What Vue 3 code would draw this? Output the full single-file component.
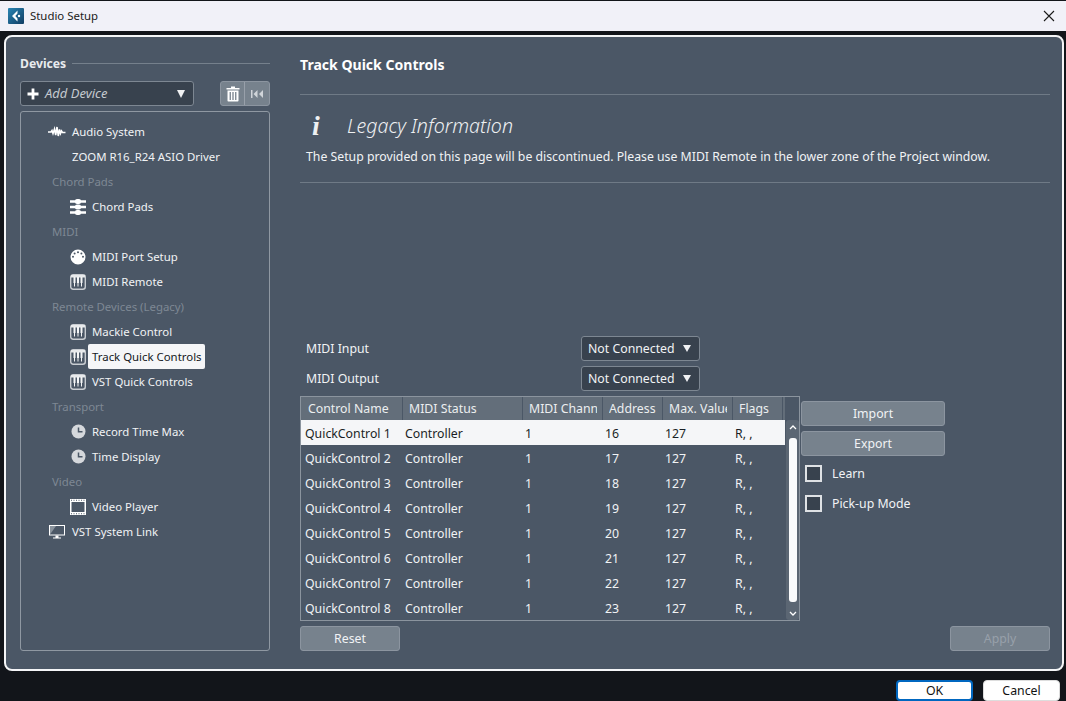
<script setup>
const tree = [
  { type: 'top', icon: 'wave', text: 'Audio System' },
  { type: 'top', icon: '', text: 'ZOOM R16_R24 ASIO Driver' },
  { type: 'group', text: 'Chord Pads' },
  { type: 'item', icon: 'pads', text: 'Chord Pads' },
  { type: 'group', text: 'MIDI' },
  { type: 'item', icon: 'din', text: 'MIDI Port Setup' },
  { type: 'item', icon: 'keys', text: 'MIDI Remote' },
  { type: 'group', text: 'Remote Devices (Legacy)' },
  { type: 'item', icon: 'keys', text: 'Mackie Control' },
  { type: 'item', icon: 'keys', text: 'Track Quick Controls', selected: true },
  { type: 'item', icon: 'keys', text: 'VST Quick Controls' },
  { type: 'group', text: 'Transport' },
  { type: 'item', icon: 'clock', text: 'Record Time Max' },
  { type: 'item', icon: 'clock', text: 'Time Display' },
  { type: 'group', text: 'Video' },
  { type: 'item', icon: 'film', text: 'Video Player' },
  { type: 'top', icon: 'monitor', text: 'VST System Link' },
]
const headers = ['Control Name', 'MIDI Status', 'MIDI Channel', 'Address', 'Max. Value', 'Flags']
const rows = Array.from({ length: 8 }, (_, i) => ({
  name: `QuickControl ${i + 1}`,
  status: 'Controller',
  channel: '1',
  address: String(16 + i),
  max: '127',
  flags: 'R, ,',
}))
</script>

<template>
  <div class="window">
    <header class="titlebar">
      <svg class="logo" viewBox="0 0 16 16" width="16" height="16">
        <defs>
          <linearGradient id="lg" x1="0" y1="0" x2="1" y2="1">
            <stop offset="0" stop-color="#2a86b4" />
            <stop offset="1" stop-color="#103c62" />
          </linearGradient>
        </defs>
        <rect width="16" height="16" rx="1" fill="url(#lg)" />
        <path d="M9.5 2.5 L4 8 L9.5 13.5 L9.5 10.5 L7.3 8 L9.5 5.5 Z" fill="#fff" />
        <circle cx="11" cy="8" r="1.2" fill="#fff" />
      </svg>
      <span class="title">Studio Setup</span>
      <svg class="close" viewBox="0 0 12 12" width="12" height="12">
        <path d="M1 1 L11 11 M11 1 L1 11" stroke="#1a1a1a" stroke-width="1.1" fill="none" />
      </svg>
    </header>

    <main class="panel">
      <aside class="devices">
        <div class="devices-head">
          <span class="devices-title">Devices</span>
          <span class="devices-line"></span>
        </div>
        <div class="toolbar">
          <div class="add-device">
            <svg viewBox="0 0 12 12" width="12" height="12"><path d="M4.6 0.5h2.8v4.1h4.1v2.8H7.4v4.1H4.6V7.4H0.5V4.6h4.1z" fill="#fff" /></svg>
            <span class="add-text">Add Device</span>
            <span class="tri big"></span>
          </div>
          <div class="tool-group">
            <button class="tool first">
              <svg viewBox="0 0 14 16" width="14" height="16">
                <path d="M5 0.5h4v1.5h4.5v1.6H.5V2H5z" fill="#fff" />
                <path d="M1.5 4.5h11v10.2a.8.8 0 0 1-.8.8H2.3a.8.8 0 0 1-.8-.8z M3.6 6v8h1.300V6z M6.35 6v8h1.300V6z M9.1 6v8h1.300V6z" fill="#fff" fill-rule="evenodd" />
              </svg>
            </button>
            <button class="tool">
              <svg viewBox="0 0 12 8" width="12" height="8" class="rew">
                <path d="M0 0h1.500v8H0z M6.500 0v8L2.500 4z M12 0v8L8 4z" fill="#d5d9de" />
              </svg>
            </button>
          </div>
        </div>
        <div class="tree">
          <div v-for="(n, i) in tree" :key="i" class="node" :class="[n.type, { selected: n.selected }]">
            <span v-if="n.type !== 'group'" class="ico">
              <svg v-if="n.icon === 'wave'" viewBox="0 0 18 12" width="18" height="12">
                <path d="M0 6h3l1-1.500 1 3 1.500-4.500 1.200 6 1.300-8 1.300 9 1.200-6.500 1 4 1-2.500 1 1.500h3" stroke="#fff" stroke-width="1.600" fill="none" />
              </svg>
              <svg v-else-if="n.icon === 'pads'" viewBox="0 0 16 16" width="16" height="16">
                <path d="M0 1.300h16v2.400H0z M0 6.800h16v2.400H0z M0 12.300h16v2.400H0z" fill="#fff" />
                <rect x="5" y="0" width="6" height="5" rx="2" fill="#fff" /><rect x="5" y="5.500" width="6" height="5" rx="2" fill="#fff" /><rect x="5" y="11" width="6" height="5" rx="2" fill="#fff" />
              </svg>
              <svg v-else-if="n.icon === 'din'" viewBox="0 0 16 16" width="16" height="16">
                <path fill-rule="evenodd" fill="#fff" d="M8 .5a7.500 7.500 0 1 1 0 15A7.500 7.500 0 0 1 8 .5z M3 6.800a1 1 0 1 0 0 2 1 1 0 0 0 0-2z M4.600 3.600a1 1 0 1 0 0 2 1 1 0 0 0 0-2z M8 2.200a1 1 0 1 0 0 2 1 1 0 0 0 0-2z M11.400 3.600a1 1 0 1 0 0 2 1 1 0 0 0 0-2z M13 6.800a1 1 0 1 0 0 2 1 1 0 0 0 0-2z" />
              </svg>
              <svg v-else-if="n.icon === 'keys'" viewBox="0 0 16 16" width="16" height="16">
                <rect x=".7" y=".7" width="14.600" height="14.600" rx="2.500" fill="none" stroke="#c9cdd2" stroke-width="1.400" />
                <path d="M1 1h14v2.500H1z" fill="#e8eaec" />
                <path d="M3.500 3h2v6h-2z M7 3h2v6H7z M10.500 3h2v6h-2z M4 9h1v3.500H4z M7.500 9h1v3.500h-1z M11 9h1v3.500h-1z" fill="#f4f5f6" />
              </svg>
              <svg v-else-if="n.icon === 'clock'" viewBox="0 0 15 15" width="15" height="15">
                <circle cx="7.500" cy="7.500" r="7" fill="#d5d8dc" />
                <path d="M7.500 3.500v4.300h4" stroke="#4b5766" stroke-width="1.500" fill="none" />
              </svg>
              <svg v-else-if="n.icon === 'film'" viewBox="0 0 16 16" width="16" height="16">
                <path fill="#fff" fill-rule="evenodd" d="M0 0h16v16H0z M1.500 3v10h13V3z" />
                <path d="M1 .8h1v1H1z M3.500 .8h1v1h-1z M6 .8h1v1H6z M8.500 .8h1v1h-1z M11 .8h1v1h-1z M13.500 .8h1v1h-1z M1 14.200h1v1H1z M3.500 14.200h1v1h-1z M6 14.200h1v1H6z M8.500 14.200h1v1h-1z M11 14.200h1v1h-1z M13.500 14.200h1v1h-1z" fill="#4b5766" />
              </svg>
              <svg v-else-if="n.icon === 'monitor'" viewBox="0 0 16 14" width="16" height="14">
                <rect x=".5" y=".5" width="15" height="9.500" fill="#4b5766" stroke="#fff" />
                <path d="M1 9.500L7 1H1z" fill="#8a939d" />
                <path d="M6.500 10.500h3v2h2.500v1H4v-1h2.500z" fill="#fff" />
              </svg>
            </span>
            <span class="label">{{ n.text }}</span>
          </div>
        </div>
      </aside>

      <section class="content">
        <h1 class="page-title">Track Quick Controls</h1>
        <div class="info">
          <div class="info-head">
            <span class="info-i">i</span>
            <span class="info-title">Legacy Information</span>
          </div>
          <p class="info-text">The Setup provided on this page will be discontinued. Please use MIDI Remote in the lower zone of the Project window.</p>
        </div>

        <div class="ports">
          <div class="port">
            <span class="port-label">MIDI Input</span>
            <div class="select"><span>Not Connected</span><span class="tri"></span></div>
          </div>
          <div class="port">
            <span class="port-label">MIDI Output</span>
            <div class="select"><span>Not Connected</span><span class="tri"></span></div>
          </div>
        </div>

        <div class="table-row">
          <div class="table">
            <div class="grid-area">
              <div class="thead">
                <div v-for="h in headers" :key="h" class="th"><span class="th-text">{{ h }}</span></div>
                <div class="th-fill"></div>
              </div>
              <div v-for="(r, i) in rows" :key="r.name" class="tr" :class="{ sel: i === 0 }">
                <div class="td first">{{ r.name }}</div>
                <div class="td">{{ r.status }}</div>
                <div class="td">{{ r.channel }}</div>
                <div class="td">{{ r.address }}</div>
                <div class="td">{{ r.max }}</div>
                <div class="td">{{ r.flags }}</div>
              </div>
            </div>
            <div class="scroll">
              <svg viewBox="0 0 8 5" width="8" height="5"><path d="M1 4L4 1l3 3" stroke="#fff" stroke-width="1.300" fill="none" /></svg>
              <div class="thumb"></div>
              <svg viewBox="0 0 8 5" width="8" height="5"><path d="M1 1l3 3 3-3" stroke="#fff" stroke-width="1.300" fill="none" /></svg>
            </div>
          </div>
          <div class="side">
            <button class="btn side-btn">Import</button>
            <button class="btn side-btn">Export</button>
            <label class="check"><span class="box"></span>Learn</label>
            <label class="check"><span class="box"></span>Pick-up Mode</label>
          </div>
        </div>

        <div class="actions">
          <button class="btn wide">Reset</button>
          <button class="btn wide disabled">Apply</button>
        </div>
      </section>
    </main>

    <footer class="footer">
      <button class="dlg primary">OK</button>
      <button class="dlg">Cancel</button>
    </footer>
  </div>
</template>

<style>
html, body { margin: 0; background: #12151a; overflow: hidden; }
</style>

<style scoped>
.window {
  width: 1066px;
  height: 701px;
  background: #12151a;
  display: flex;
  flex-direction: column;
  font-family: "Noto Sans", "Open Sans", sans-serif;
  font-size: 12.3px;
  color: #f1f3f5;
  overflow: hidden;
}
.titlebar {
  height: 30px;
  margin-top: 1px;
  flex: none;
  background: #f1f1f8;
  display: flex;
  align-items: center;
  padding: 0 11px 0 8px;
  color: #1b1b1b;
}
.logo { flex: none; }
.title { margin-left: 6px; font-size: 11.4px; padding-bottom: 2px; }
.close { margin-left: auto; }

.panel {
  flex: none;
  height: 636px;
  margin: 4px 0 0 4px;
  width: 1060px;
  box-sizing: border-box;
  border: 2px solid #f4f5f7;
  border-radius: 8px;
  background: #4b5766;
  display: flex;
  padding: 14px 12px 18px 14px;
  gap: 30px;
}

.devices { width: 250px; flex: none; display: flex; flex-direction: column; }
.devices-head { display: flex; align-items: center; height: 24px; gap: 6px; }
.devices-title { font-weight: 700; font-size: 12.2px; color: #e8ebee; }
.devices-line { flex: 1; height: 1px; background: #75808c; }
.toolbar { display: flex; justify-content: space-between; margin-top: 6px; }
.add-device {
  width: 174px; height: 25px; box-sizing: border-box;
  background: #38424e; border: 1px solid #7d8792; border-radius: 3px;
  display: flex; align-items: center; padding: 0 6px 0 6px; gap: 6px;
}
.add-text { font-style: italic; color: #c5cad0; flex: 1; font-size: 13px; padding-bottom: 2px; }
.tri {
  width: 0; height: 0; border-left: 4px solid transparent; border-right: 4px solid transparent;
  border-top: 7px solid #f0f1f3; margin-left: auto;
}
.tri.big { border-left-width: 4.500px; border-right-width: 4.500px; border-top-width: 8px; margin-right: 2px; }
.tool-group {
  display: flex; width: 50px; height: 25px; box-sizing: border-box;
  background: #77828d; border: 1px solid #8c95a0; border-radius: 3px; overflow: hidden;
}
.tool { flex: none; width: 24px; border: 0; background: none; padding: 0; display: flex; align-items: center; justify-content: center; }
.tool.first { width: 23px; }
.tool + .tool { border-left: 1px solid #98a0aa; }
.rew { opacity: .95; }

.tree {
  margin-top: 5px; flex: 1; box-sizing: border-box;
  border: 1px solid #8f98a2; border-radius: 3px; padding-top: 7px; font-size: 11.4px;
}
.node { height: 25px; display: flex; align-items: center; position: relative; }
.ico { position: absolute; top: 0; bottom: 0; display: flex; align-items: center; justify-content: center; width: 18px; }
.node.top { padding-left: 51px; }
.node.top .ico { left: 27px; }
.node.item { padding-left: 71px; }
.node.item .ico { left: 48px; }
.node.group { padding-left: 31px; color: #7e8894; }
.label { white-space: nowrap; line-height: 25px; height: 25px; box-sizing: border-box; }
.node.selected .label {
  background: #f5f6f8; color: #14181d; border-radius: 2px;
  padding: 0 3px 0 4px; margin-left: -4px;
}

.content { flex: 1; min-width: 0; display: flex; flex-direction: column; }
.page-title { margin: 0; height: 26px; line-height: 28px; font-size: 14.05px; font-weight: 700; color: #fff; }
.info {
  margin-top: 17px; border-top: 1px solid #6f7a86; border-bottom: 1px solid #6f7a86;
  padding: 0 6px; height: 89px; box-sizing: border-box;
}
.info-head { display: flex; align-items: center; height: 49px; padding-top: 12px; box-sizing: border-box; }
.info-i {
  width: 41px; font-family: "Liberation Serif", serif; font-weight: 700; font-style: italic;
  font-size: 28px; line-height: 1; padding-left: 6px; box-sizing: border-box; color: #eef0f2;
}
.info-title { font-style: italic; font-size: 19.6px; color: #eef0f2; font-weight: 300; }
.info-text { margin: 0; line-height: 25px; white-space: nowrap; font-size: 12.27px; }

.ports { margin-top: auto; padding: 0 6px; display: flex; flex-direction: column; gap: 5px; }
.port { display: flex; align-items: center; height: 25px; }
.port-label { width: 275px; }
.select {
  width: 119px; height: 25px; box-sizing: border-box;
  background: #38424e; border: 1px solid #7d8792; border-radius: 3px;
  display: flex; align-items: center; padding: 0 8px 0 6px;
}

.table-row { display: flex; margin-top: 5px; }
.table {
  width: 500px; height: 225px; box-sizing: border-box;
  border: 1px solid #8b949e; display: flex;
}
.grid-area { flex: 1; min-width: 0; }
.thead, .tr { display: grid; grid-template-columns: 102px 120px 80px 60px 70px 50px 1fr; }
.thead { height: 23px; background: #636e7a; }
.th {
  padding-left: 6px; line-height: 23px; overflow: hidden;
  border-right: 1px solid #4b5766; color: #eceef0;
}
.th:first-child { padding-left: 7px; }
.th-text { display: block; white-space: nowrap; overflow: hidden; margin-right: 5px; }
.tr { height: 25px; align-items: center; }
.td { padding: 2px 0 0 2px; white-space: nowrap; }
.td.first { padding-left: 4px; }
.tr.sel { background: #f5f6f8; color: #1a1f25; }
.scroll {
  width: 13px; flex: none; margin-left: 1px; background: #5b6673; border-radius: 3px;
  margin-top: 23px; display: flex; flex-direction: column; align-items: center; padding: 5px 0 4px; box-sizing: border-box;
  justify-content: space-between;
}
.thumb { flex: 1; width: 8px; margin: 8px 0 9px; background: #fafbfc; border-radius: 3px; }

.side { flex: 1; display: flex; flex-direction: column; padding: 5px 0 0 1px; }
.btn {
  font: inherit; color: #f1f3f5; background: #77828d; border: 1px solid #8c95a0; border-radius: 3px;
  height: 25px; padding: 0; flex: none;
}
.side-btn { width: 144px; margin-bottom: 5px; }
.check { display: flex; align-items: center; height: 25px; margin-left: 4px; margin-bottom: 5px; gap: 10px; }
.box { width: 13px; height: 13px; border: 2px solid #dfe2e5; background: #38424e; flex: none; }

.actions { display: flex; justify-content: space-between; margin-top: 5px; }
.wide { width: 100px; }
.disabled { color: #97a0aa; }

.footer { flex: 1; display: flex; justify-content: flex-end; gap: 10px; padding: 9px 6px 0 0; }
.dlg {
  width: 77px; height: 21px; box-sizing: border-box; font: inherit; color: #111;
  background: #fff; border: 1px solid #ddd; border-radius: 4px; padding: 0;
}
.dlg.primary { border: 2px solid #0067c0; }
</style>
